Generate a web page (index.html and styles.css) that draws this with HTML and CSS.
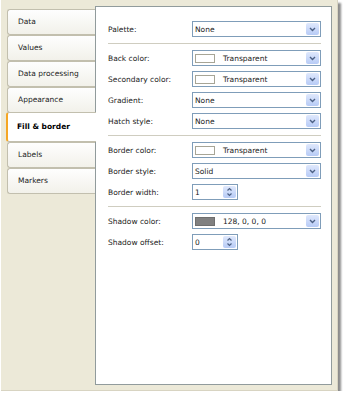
FILE: index.html
```html
<!DOCTYPE html>
<html lang="en">
<head>
    <meta charset="UTF-8">
    <title>Fill &amp; border</title>
    <link rel="stylesheet" href="styles.css">
</head>
<body>
    <div class="dialog">
        <!-- Tab list on the left -->
        <ul class="tabs">
            <li class="tab">Data</li>
            <li class="tab">Values</li>
            <li class="tab">Data processing</li>
            <li class="tab">Appearance</li>
            <li class="tab active">Fill &amp; border</li>
            <li class="tab">Labels</li>
            <li class="tab">Markers</li>
        </ul>

        <!-- Tab page -->
        <div class="panel">
            <div class="group">
                <div class="row">
                    <span class="label">Palette:</span>
                    <div class="combo"><span class="value">None</span><span class="drop"><svg width="7" height="5" viewBox="0 0 7 5"><path d="M1 1 L3.5 3.5 L6 1" fill="none" stroke="#4d6185" stroke-width="1.4"/></svg></span></div>
                </div>
            </div>
            <div class="sep"></div>
            <div class="group">
                <div class="row">
                    <span class="label">Back color:</span>
                    <div class="combo"><span class="swatch"></span><span class="value">Transparent</span><span class="drop"><svg width="7" height="5" viewBox="0 0 7 5"><path d="M1 1 L3.5 3.5 L6 1" fill="none" stroke="#4d6185" stroke-width="1.4"/></svg></span></div>
                </div>
                <div class="row">
                    <span class="label">Secondary color:</span>
                    <div class="combo"><span class="swatch"></span><span class="value">Transparent</span><span class="drop"><svg width="7" height="5" viewBox="0 0 7 5"><path d="M1 1 L3.5 3.5 L6 1" fill="none" stroke="#4d6185" stroke-width="1.4"/></svg></span></div>
                </div>
                <div class="row">
                    <span class="label">Gradient:</span>
                    <div class="combo"><span class="value">None</span><span class="drop"><svg width="7" height="5" viewBox="0 0 7 5"><path d="M1 1 L3.5 3.5 L6 1" fill="none" stroke="#4d6185" stroke-width="1.4"/></svg></span></div>
                </div>
                <div class="row">
                    <span class="label">Hatch style:</span>
                    <div class="combo"><span class="value">None</span><span class="drop"><svg width="7" height="5" viewBox="0 0 7 5"><path d="M1 1 L3.5 3.5 L6 1" fill="none" stroke="#4d6185" stroke-width="1.4"/></svg></span></div>
                </div>
            </div>
            <div class="sep"></div>
            <div class="group">
                <div class="row">
                    <span class="label">Border color:</span>
                    <div class="combo"><span class="swatch"></span><span class="value">Transparent</span><span class="drop"><svg width="7" height="5" viewBox="0 0 7 5"><path d="M1 1 L3.5 3.5 L6 1" fill="none" stroke="#4d6185" stroke-width="1.4"/></svg></span></div>
                </div>
                <div class="row">
                    <span class="label">Border style:</span>
                    <div class="combo"><span class="value">Solid</span><span class="drop"><svg width="7" height="5" viewBox="0 0 7 5"><path d="M1 1 L3.5 3.5 L6 1" fill="none" stroke="#4d6185" stroke-width="1.4"/></svg></span></div>
                </div>
                <div class="row">
                    <span class="label">Border width:</span>
                    <div class="combo spin"><span class="value">1</span><span class="spin-btn"><svg width="7" height="10" viewBox="0 0 7 10"><path d="M1.5 3.5 L3.5 1.5 L5.5 3.5 M1.5 6.5 L3.5 8.5 L5.5 6.5" fill="none" stroke="#4d6185" stroke-width="1.2"/></svg></span></div>
                </div>
            </div>
            <div class="sep"></div>
            <div class="group">
                <div class="row">
                    <span class="label">Shadow color:</span>
                    <div class="combo"><span class="swatch gray"></span><span class="value">128, 0, 0, 0</span><span class="drop"><svg width="7" height="5" viewBox="0 0 7 5"><path d="M1 1 L3.5 3.5 L6 1" fill="none" stroke="#4d6185" stroke-width="1.4"/></svg></span></div>
                </div>
                <div class="row">
                    <span class="label">Shadow offset:</span>
                    <div class="combo spin"><span class="value">0</span><span class="spin-btn"><svg width="7" height="10" viewBox="0 0 7 10"><path d="M1.5 3.5 L3.5 1.5 L5.5 3.5 M1.5 6.5 L3.5 8.5 L5.5 6.5" fill="none" stroke="#4d6185" stroke-width="1.2"/></svg></span></div>
                </div>
            </div>
        </div>
    </div>
</body>
</html>
```

FILE: styles.css
```css
body {
    margin: 0;
    background-color: #fff;
    font-family: "DejaVu Sans", Tahoma, sans-serif;
    font-size: 7.5px;
    color: #222;
}

/* Outer dialog frame */
.dialog {
    display: flex;
    width: 337px;
    height: 391px;
    box-sizing: border-box;
    margin-left: 1px;
    padding: 6px 5px 5px 5px;
    background-color: #ece9d8;
    border-right: 1px solid #d8d4c2;
    border-bottom: 1px solid #d8d4c2;
    box-shadow: 3px 3px 2px rgba(0, 0, 0, 0.45);
}

/* Tab list */
.tabs {
    list-style: none;
    margin: 3px 0 0 0;
    padding: 0;
    width: 89px;
    flex: none;
}

.tab {
    height: 26px;
    box-sizing: border-box;
    margin-left: 1px;
    padding-left: 10px;
    line-height: 24px;
    border: 1px solid #c2bfae;
    border-right: none;
    border-radius: 3px 0 0 3px;
    background: linear-gradient(#fefefe, #f2f1ea);
    color: #222;
}

.tab.active {
    position: relative;
    z-index: 1;
    height: 30px;
    margin: -1px -1px 0 0;
    padding-left: 9px;
    line-height: 28px;
    border-left: 2px solid #f5a623;
    border-color: #c2bfae #c2bfae #c2bfae #f5a623;
    background: #fff;
    font-weight: bold;
    color: #000;
}

/* Tab page */
.panel {
    flex: 1;
    background-color: #fff;
    border: 1px solid #919b9c;
    padding: 14px 10px 0 12px;
}

.group {
    display: flex;
    flex-direction: column;
    gap: 5px;
}

.sep {
    height: 1px;
    margin: 6px 0;
    background-color: #cfcdc0;
}

.row {
    display: flex;
    align-items: center;
    height: 16px;
}

.label {
    width: 84px;
    flex: none;
}

/* Combo boxes */
.combo {
    flex: 1;
    display: flex;
    align-items: center;
    height: 16px;
    box-sizing: border-box;
    border: 1px solid #7f9db9;
    background-color: #fff;
}

.combo .value {
    flex: 1;
    padding-left: 2px;
    white-space: nowrap;
}

.drop,
.spin-btn {
    display: flex;
    align-items: center;
    justify-content: center;
    width: 13px;
    align-self: stretch;
    margin: 1px;
    border-radius: 2px;
    background: linear-gradient(#dfe8fc, #b7cbf6);
}

.combo.spin {
    flex: none;
    width: 46px;
}

.swatch {
    flex: none;
    width: 18px;
    height: 7px;
    margin: 0 6px 0 2px;
    border: 1px solid #a7a596;
    background-color: #fff;
}

.swatch.gray {
    background-color: #808080;
    border-color: #6e6e6e;
}
```
